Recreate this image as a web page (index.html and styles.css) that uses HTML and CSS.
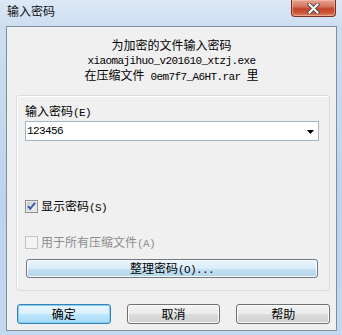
FILE: index.html
```html
<!DOCTYPE html>
<html lang="zh-CN">
<head>
<meta charset="utf-8">
<title>输入密码</title>
<link rel="stylesheet" href="styles.css">
</head>
<body>
<div class="window">
  <div class="titlebar">
    <span class="title">输入密码</span>
    <button class="close" aria-label="关闭">
      <svg width="13" height="11" viewBox="0 0 13 11">
        <path d="M2.5 1.5 L10.5 9.5 M10.5 1.5 L2.5 9.5" stroke="#5a4a4a" stroke-width="4" stroke-linecap="square" fill="none"/>
        <path d="M2.5 1.5 L10.5 9.5 M10.5 1.5 L2.5 9.5" stroke="#ffffff" stroke-width="2" stroke-linecap="square" fill="none"/>
      </svg>
    </button>
  </div>
  <div class="client">
    <div class="header">
      <div>为加密的文件输入密码</div>
      <div><span class="en">xiaomajihuo_v201610_xtzj.exe</span></div>
      <div>在压缩文件<span class="en"> 0em7f7_A6HT.rar </span>里</div>
    </div>
    <div class="group">
      <div class="label">输入密码<span class="en">(E)</span></div>
      <div class="combo">
        <span class="en">123456</span>
        <svg class="arrow" width="7" height="4" viewBox="0 0 7 4"><polygon points="0,0 7,0 3.5,4" fill="#000"/></svg>
      </div>
      <div class="check first">
        <svg class="box" width="13" height="13" viewBox="0 0 13 13">
          <defs>
            <linearGradient id="cg" x1="0" y1="0" x2="1" y2="1">
              <stop offset="0" stop-color="#cbcfd5"/>
              <stop offset="1" stop-color="#f6f6f6"/>
            </linearGradient>
          </defs>
          <rect x="0.5" y="0.5" width="12" height="12" fill="#fff" stroke="#8e8f8f"/>
          <rect x="2" y="2" width="9" height="9" fill="url(#cg)" stroke="#b0b4bb" stroke-width="0.5"/>
          <path d="M3 6.2 L5.2 8.8 L10 2.8" stroke="#3f5aa0" stroke-width="2" fill="none"/>
        </svg>
        <span class="ctext">显示密码<span class="en">(S)</span></span>
      </div>
      <div class="check disabled">
        <svg class="box" width="13" height="13" viewBox="0 0 13 13">
          <rect x="0.5" y="0.5" width="12" height="12" fill="#f4f4f4" stroke="#c4c4c4"/>
        </svg>
        <span class="ctext">用于所有压缩文件<span class="en">(A)</span></span>
      </div>
      <button class="btn wide">整理密码<span class="en">(O)...</span></button>
    </div>
    <div class="buttons">
      <button class="btn default">确定</button>
      <button class="btn">取消</button>
      <button class="btn">帮助</button>
    </div>
  </div>
</div>
</body>
</html>
```
FILE: styles.css
```css
* { box-sizing: border-box; }
html, body { margin: 0; padding: 0; }
body {
  font-family: "Noto Sans CJK SC", "Liberation Sans", sans-serif;
  font-size: 12px;
  color: #000;
  background: #c9dbef;
}
.en {
  font-family: "Liberation Mono", monospace;
  font-size: 11px;
  letter-spacing: -0.6px;
}
.window {
  width: 342px;
  height: 335px;
  padding: 0 5px 4px 6px;
  display: flex;
  flex-direction: column;
  background: linear-gradient(to bottom, #dce8f5 0, #cddef1 26px, #bdd3ec 60%, #c4d8ef 100%);
}
.titlebar {
  height: 26px;
  display: flex;
  justify-content: space-between;
  align-items: flex-start;
}
.title {
  padding: 4px 0 0 1px;
  line-height: 14px;
  font-size: 12px;
  color: #111;
}
.close {
  width: 45px;
  height: 17px;
  margin: 0 1px 0 0;
  padding: 0;
  border: 1px solid #7a2f22;
  border-top: none;
  border-radius: 0 0 4px 4px;
  background: linear-gradient(to bottom, #e8a493 0, #d7765e 40%, #c2452b 55%, #cc5538 80%, #df8a6c 100%);
  box-shadow: inset 0 0 0 1px rgba(255, 210, 190, 0.45);
  display: flex;
  align-items: center;
  justify-content: center;
}
.close svg { display: block; }
.client {
  flex: 1;
  background: #f0f0f0;
  border: 1px solid #7f8fa2;
  display: flex;
  flex-direction: column;
}
.header {
  padding-top: 11px;
  text-align: center;
  line-height: 14px;
}
.group {
  margin: 11px 6px 0 9px;
  border: 1px solid #d5dfe5;
  border-radius: 3px;
  box-shadow: inset 1px 1px 0 #fff;
  padding: 8px 10px 12px 8px;
  display: flex;
  flex-direction: column;
}
.label {
  line-height: 14px;
  height: 14px;
}
.combo {
  margin-top: 3px;
  height: 20px;
  border: 1px solid #a3b6cb;
  background: #fff;
  display: flex;
  align-items: center;
  justify-content: space-between;
  padding: 0 4px 0 1px;
  line-height: 14px;
}
.arrow { display: block; margin-top: 1px; }
.check {
  display: flex;
  align-items: center;
  height: 13px;
  line-height: 14px;
}
.check.first { margin-top: 59px; }
.check.disabled { margin-top: 23px; color: #8d8d8d; }
.box { display: block; flex: none; }
.ctext { margin-left: 3px; }
.btn {
  font-family: "Noto Sans CJK SC", "Liberation Sans", sans-serif;
  font-size: 12px;
  color: #000;
  line-height: 14px;
  padding: 0;
  border: 1px solid #707070;
  border-radius: 3px;
  background: linear-gradient(to bottom, #f2f2f2 0, #ebebeb 50%, #dddddd 50%, #cfcfcf 100%);
  box-shadow: inset 0 0 0 1px #fbfbfb;
}
.btn.wide {
  margin: 10px 1px 0 1px;
  height: 19px;
  background: linear-gradient(to bottom, #eaf5fc 0, #dbedf9 50%, #c6e1f3 50%, #b3d5ec 100%);
  border-color: #6f7a86;
}
.buttons {
  margin: 13px 6px 0 10px;
  display: flex;
  gap: 16px;
}
.buttons .btn {
  flex: 1;
  height: 20px;
}
.btn.default {
  border-color: #3c7fb1;
  background: linear-gradient(to bottom, #eaf6fd 0, #d9f0fc 50%, #bee6fd 50%, #a7d9f5 100%);
  box-shadow: inset 0 0 0 1px #7fd2f8;
}
```
